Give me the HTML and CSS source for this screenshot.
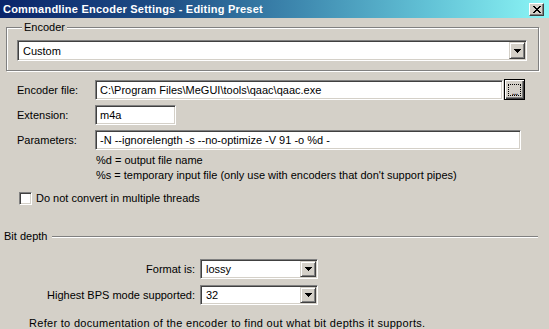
FILE: index.html
```html
<!DOCTYPE html>
<html>
<head>
<meta charset="utf-8">
<title>Commandline Encoder Settings - Editing Preset</title>
<link rel="stylesheet" href="styles.css">
</head>
<body>
<div class="titlebar">
  <span class="title">Commandline Encoder Settings - Editing Preset</span>
  <span class="close"><svg width="8" height="7" viewBox="0 0 8 7" shape-rendering="crispEdges"><path d="M0 0h2v1h1v1h2v-1h1v-1h2v1h-1v1h-1v1h-1v1h1v1h1v1h1v1h-2v-1h-1v-1h-2v1h-1v1h-2v-1h1v-1h1v-1h1v-1h-1v-1h-1v-1h-1z" fill="#000"/></svg></span>
</div>

<fieldset class="group">
  <legend>Encoder</legend>
  <div class="combo wide">
    <span class="val">Custom</span>
    <span class="dd"><svg width="7" height="4" viewBox="0 0 7 4" shape-rendering="crispEdges"><path d="M0 0h7v1h-1v1h-1v1h-1v1h-1v-1h-1v-1h-1v-1h-1z" fill="#000"/></svg></span>
  </div>
</fieldset>

<div class="form">
  <div class="lbl">Encoder file:</div>
  <div class="filerow">
    <div class="tb file">C:\Program Files\MeGUI\tools\qaac\qaac.exe</div>
    <div class="browse"><span class="focus">...</span></div>
  </div>
  <div class="lbl">Extension:</div>
  <div class="tb ext">m4a</div>
  <div class="lbl">Parameters:</div>
  <div class="tb params">-N --ignorelength -s --no-optimize -V 91 -o %d -</div>
  <div class="help">
    <div>%d = output file name</div>
    <div>%s = temporary input file (only use with encoders that don't support pipes)</div>
  </div>
</div>

<div class="check">
  <span class="box"></span>
  <span>Do not convert in multiple threads</span>
</div>

<div class="section">
  <span>Bit depth</span>
  <span class="rule"></span>
</div>

<div class="bits">
  <div class="blbl">Format is:</div>
  <div class="combo small">
    <span class="val">lossy</span>
    <span class="dd"><svg width="7" height="4" viewBox="0 0 7 4" shape-rendering="crispEdges"><path d="M0 0h7v1h-1v1h-1v1h-1v1h-1v-1h-1v-1h-1v-1h-1z" fill="#000"/></svg></span>
  </div>
  <div class="blbl">Highest BPS mode supported:</div>
  <div class="combo small">
    <span class="val">32</span>
    <span class="dd"><svg width="7" height="4" viewBox="0 0 7 4" shape-rendering="crispEdges"><path d="M0 0h7v1h-1v1h-1v1h-1v1h-1v-1h-1v-1h-1v-1h-1z" fill="#000"/></svg></span>
  </div>
</div>

<div class="note">Refer to documentation of the encoder to find out what bit depths it supports.</div>
</body>
</html>
```

FILE: styles.css
```css
html, body {
  margin: 0;
  padding: 0;
}
body {
  width: 549px;
  height: 329px;
  overflow: hidden;
  background: #d4d0c8;
  color: #000;
  font-family: "Liberation Sans", Arial, sans-serif;
  font-size: 11px;
  line-height: 13px;
}

/* title bar */
.titlebar {
  height: 18px;
  display: flex;
  align-items: center;
  padding-left: 3px;
  background: linear-gradient(to right, #0a246a 0%, #1e4f86 30%, #3f8ab0 55%, #62c2d6 78%, #8cf6f6 100%);
  color: #fff;
  font-weight: bold;
  font-size: 11px;
  letter-spacing: 0.22px;
}
.title {
  white-space: nowrap;
}
.close {
  margin-left: auto;
  margin-right: 5px;
  width: 15px;
  height: 13px;
  box-sizing: border-box;
  background: #d4d0c8;
  border: 1px solid;
  border-color: #fff #404040 #404040 #fff;
  box-shadow: inset -1px -1px #808080;
  display: flex;
  align-items: center;
  justify-content: center;
}
.close svg { display: block; }

/* group box */
.group {
  margin: 3px 10px 0 6px;
  padding: 6px 11px 9px 10px;
  border: 1px solid #808080;
  box-shadow: inset 1px 1px #fff, 1px 1px #fff;
  min-width: 0;
}
.group legend {
  margin-left: 5px;
  padding: 0 2px;
  line-height: 13px;
  background: #d4d0c8;
}

/* combo boxes */
.combo {
  display: flex;
  align-items: stretch;
  height: 21px;
  box-sizing: border-box;
  background: #fff;
  border: 1px solid;
  border-color: #808080 #fff #fff #808080;
  box-shadow: inset 1px 1px #404040, inset -1px -1px #d4d0c8;
  padding: 1px;
}
.combo .val {
  flex: 1;
  padding-left: 4px;
  padding-top: 1px;
  display: flex;
  align-items: center;
  white-space: nowrap;
}
.combo .dd {
  width: 16px;
  box-sizing: border-box;
  background: #d4d0c8;
  border: 1px solid;
  border-color: #d4d0c8 #404040 #404040 #d4d0c8;
  box-shadow: inset 1px 1px #fff, inset -1px -1px #808080;
  display: flex;
  align-items: center;
  justify-content: center;
}
.combo .dd svg { display: block; }

/* form rows */
.form {
  margin-top: 9px;
  padding-left: 17px;
  display: grid;
  grid-template-columns: 78px auto;
  grid-auto-rows: auto;
  row-gap: 5px;
  align-items: center;
}
.lbl {
  white-space: nowrap;
}
.tb {
  height: 20px;
  box-sizing: border-box;
  background: #fff;
  border: 1px solid;
  border-color: #808080 #fff #fff #808080;
  box-shadow: inset 1px 1px #404040, inset -1px -1px #d4d0c8;
  padding: 1px 0 0 4px;
  display: flex;
  align-items: center;
  white-space: nowrap;
}
.filerow {
  display: flex;
  align-items: flex-start;
  gap: 1px;
}
.file { width: 408px; }
.ext { width: 81px; }
.params { width: 426px; }
.browse {
  margin-top: -1px;
  width: 21px;
  height: 21px;
  box-sizing: border-box;
  border: 1px solid #000;
  background: #d4d0c8;
  box-shadow: inset 1px 1px #fff, inset -1px -1px #404040, inset -2px -2px #808080;
  display: flex;
  align-items: center;
  justify-content: center;
}
.focus {
  width: 13px;
  height: 12px;
  box-sizing: border-box;
  border: 1px dotted #000;
  font-size: 11px;
  line-height: 8px;
  display: flex;
  justify-content: center;
  align-items: flex-end;
  overflow: hidden;
  letter-spacing: -1px;
}
.help {
  grid-column: 2;
  margin-top: -2px;
  padding-left: 1px;
  line-height: 15px;
}

/* checkbox */
.check {
  margin-top: 9px;
  padding-left: 19px;
  display: flex;
  align-items: center;
  gap: 4px;
}
.box {
  width: 13px;
  height: 13px;
  box-sizing: border-box;
  background: #fff;
  border: 1px solid;
  border-color: #808080 #fff #fff #808080;
  box-shadow: inset 1px 1px #404040, inset -1px -1px #d4d0c8;
}

/* section */
.section {
  margin-top: 25px;
  padding-left: 4px;
  margin-right: 11px;
  display: flex;
  align-items: center;
  gap: 5px;
}
.rule {
  flex: 1;
  height: 0;
  border-top: 1px solid #808080;
  border-bottom: 1px solid #fff;
}

/* bit depth combos */
.bits {
  margin-top: 16px;
  display: grid;
  grid-template-columns: 195px 118px;
  column-gap: 5px;
  row-gap: 6px;
  align-items: center;
}
.blbl {
  text-align: right;
  white-space: nowrap;
}
.small { height: 20px; }

.note {
  margin-top: 12px;
  padding-left: 29px;
  white-space: nowrap;
  letter-spacing: 0.3px;
}
```
